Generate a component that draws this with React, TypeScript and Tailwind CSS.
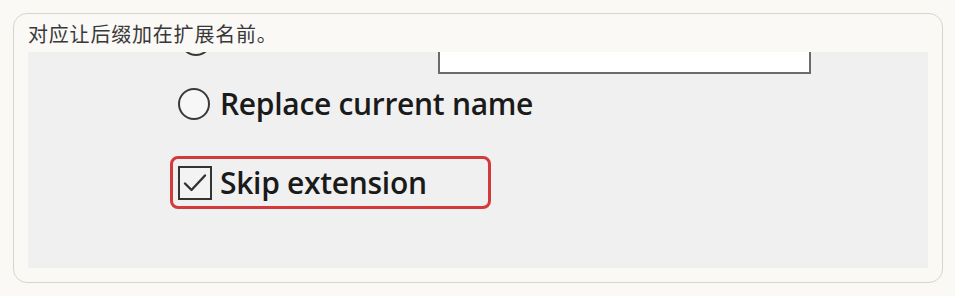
import React from 'react';

const Radio = () => (
  <div className="w-[32px] h-[32px] shrink-0 rounded-full border-2 border-[#3a3a3a] bg-[#f7f7f7]" />
);

const CheckBox = () => (
  <div className="w-[34px] h-[34px] shrink-0 border-2 border-[#333333] bg-[#f3f3f3] flex items-center justify-center">
    <svg width="26" height="26" viewBox="0 0 26 26" fill="none">
      <path d="M3 13.5 L9.5 20 L23 5.5" stroke="#333333" strokeWidth="2.4" strokeLinecap="round" strokeLinejoin="round" />
    </svg>
  </div>
);

export default function App() {
  return (
    <div className="w-[955px] h-[296px] bg-[#faf9f6] pt-[13px] pl-[13px]">
      <div className="w-[930px] h-[270px] rounded-[14px] border border-[#d9d5cb] bg-[#faf9f6] px-[14px] pb-[14px] flex flex-col">
        <p className="h-[38px] pt-[6px] text-[20px] leading-[28px] tracking-[0.8px] text-[#383838] font-['Noto_Sans_CJK_SC',sans-serif]">
          对应让后缀加在扩展名前。
        </p>
        <div className="flex-1 bg-[#f0f0f0] overflow-hidden pl-[150px] font-['Open_Sans',sans-serif] font-semibold text-[#1a1a1a]">
          {/* clipped row from the dialog above */}
          <div className="-mt-[28px] flex items-start h-[50px]">
            <div className="ml-[2px]">
              <Radio />
            </div>
            <div className="ml-[226px] w-[373px] h-[50px] bg-white border-2 border-[#6b6b6b]" />
          </div>

          <div className="mt-[14px] flex items-center gap-[10px] h-[32px]">
            <Radio />
            <span className="text-[30px] leading-none tracking-[-0.3px]">Replace current name</span>
          </div>

          <div className="mt-[36px] -ml-[8px] w-[321px] h-[53px] rounded-[8px] border-[3px] border-[#d23a3c] flex items-center pl-[5px] gap-[8px]">
            <CheckBox />
            <span className="text-[30px] leading-none tracking-[-0.3px]">Skip extension</span>
          </div>
        </div>
      </div>
    </div>
  );
}
